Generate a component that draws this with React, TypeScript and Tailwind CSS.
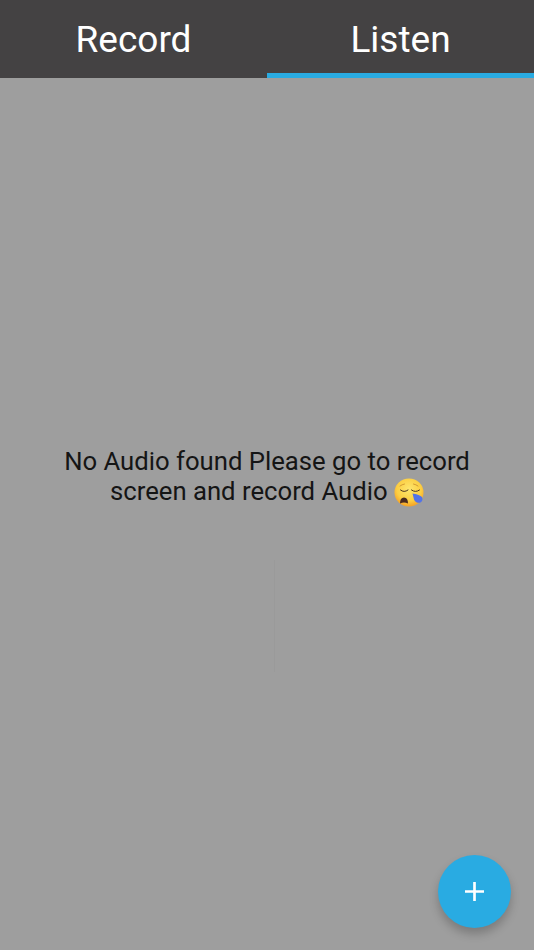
import React from 'react';

function SleepyEmoji() {
  return (
    <svg viewBox="0 0 30 30" className="inline-block w-[30px] h-[30px] align-[-8px]">
      <defs>
        <radialGradient id="face" cx="50%" cy="38%" r="60%">
          <stop offset="0%" stopColor="#fde66e" />
          <stop offset="70%" stopColor="#fcce42" />
          <stop offset="100%" stopColor="#f5a428" />
        </radialGradient>
      </defs>
      <ellipse cx="15" cy="14.5" rx="14.5" ry="14" fill="url(#face)" />
      <path d="M6 8 Q8 6.5 10.5 6" stroke="#c98a2a" strokeWidth="0.8" fill="none" strokeLinecap="round" />
      <path d="M19.5 6 Q22 6.5 24 8" stroke="#c98a2a" strokeWidth="0.8" fill="none" strokeLinecap="round" />
      <path d="M6.5 12 Q10 15 14 12" stroke="#4a3320" strokeWidth="1" fill="none" strokeLinecap="round" />
      <path d="M17.5 12 Q21.5 15 25.5 12" stroke="#4a3320" strokeWidth="1" fill="none" strokeLinecap="round" />
      <path d="M6 25.5 Q6 19.5 10 19.5 Q14 19.5 14 25.5 Q10 23.5 6 25.5 Z" fill="#4a2a20" />
      <path d="M18.5 15.5 Q24.5 16 28 19 Q29.5 23 26 24.8 Q21.5 25.2 20 21.5 Z" fill="#5273e8" />
    </svg>
  );
}

export default function App() {
  return (
    <div className="relative flex flex-col w-[534px] h-[950px] bg-[#9e9e9e] font-['Roboto',sans-serif] overflow-hidden">
      <div className="flex h-[78px] bg-[#444243] shrink-0">
        <div className="flex-1 flex items-center justify-center pt-[2px] text-white text-[37px]">
          Record
        </div>
        <div className="flex-1 flex items-center justify-center pt-[2px] text-white text-[37px] border-t-[5px] border-t-transparent border-b-[5px] border-b-[#29abe2]">
          Listen
        </div>
      </div>

      <div className="flex-1 flex items-center justify-center pb-[74px]">
        <p className="w-[440px] text-center text-[#151515] text-[25.7px] leading-[30px]">
          No Audio found Please go to record screen and record Audio <SleepyEmoji />
        </p>
      </div>

      <div className="absolute left-[274px] top-[560px] w-[1px] h-[112px] bg-[#9a9a9a]" />

      <button className="absolute left-[438px] top-[855px] w-[73px] h-[73px] rounded-full bg-[#29abe2] text-white flex items-center justify-center shadow-[0_6px_10px_rgba(0,0,0,0.22)]">
        <svg viewBox="0 0 20 20" className="w-[19px] h-[19px]">
          <path d="M0 10 H20 M10 0 V20" stroke="white" strokeWidth="2.8" />
        </svg>
      </button>
    </div>
  );
}
